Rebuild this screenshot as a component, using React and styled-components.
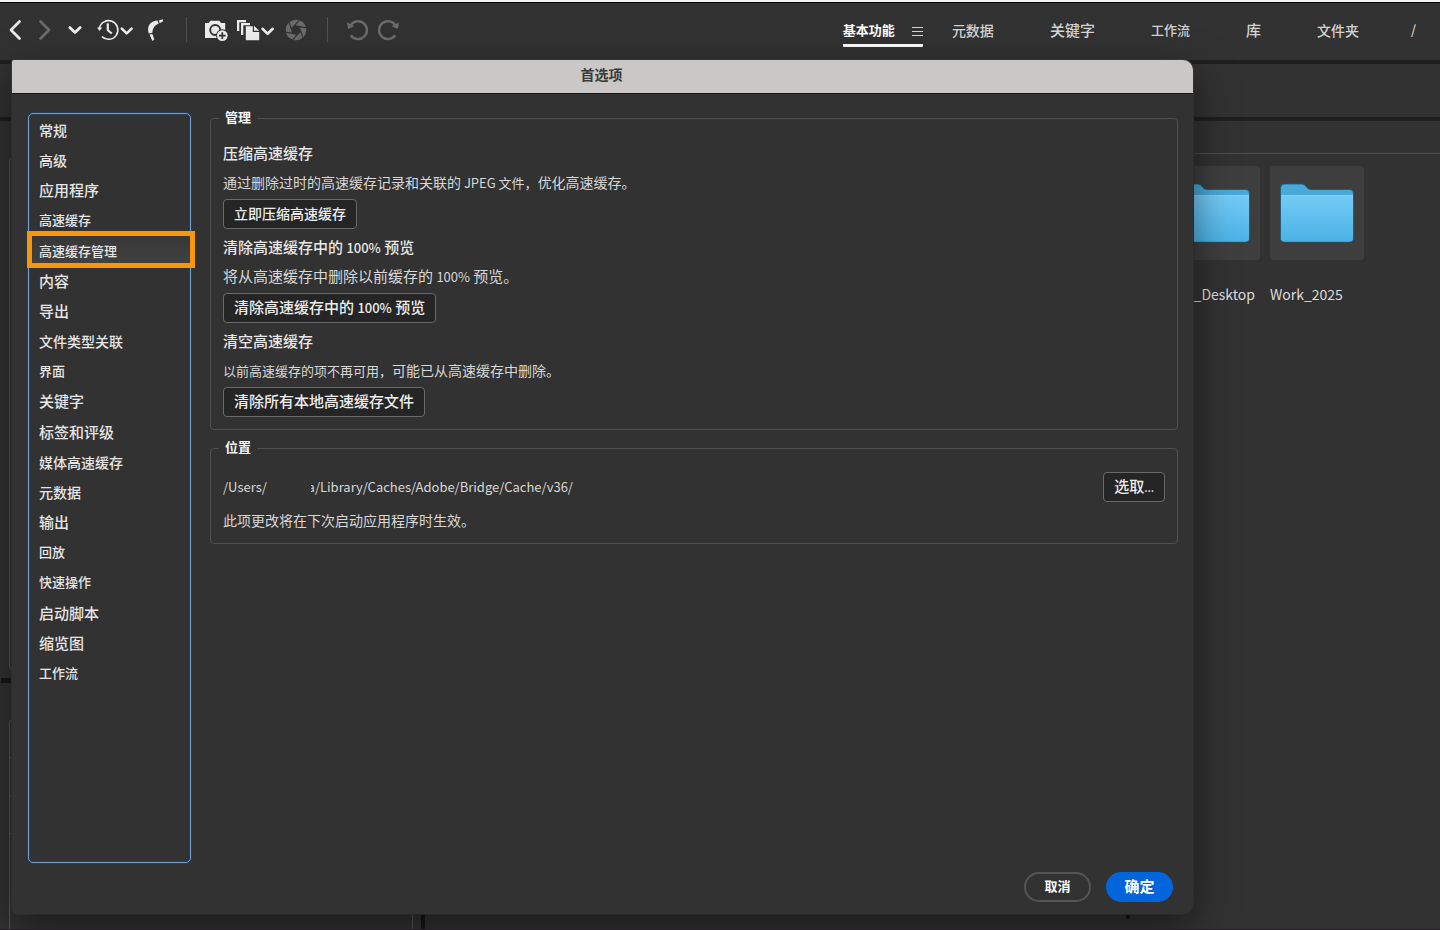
import React, { useState } from "react";
import styled, { createGlobalStyle, css } from "styled-components";

const GlobalStyle = createGlobalStyle`
  *, *::before, *::after { box-sizing: border-box; }
  body {
    margin: 0;
    background: #323232;
    color: #dedede;
    font-family: "Noto Sans CJK SC", "Noto Sans", sans-serif;
    font-size: 14px;
    line-height: 20px;
  }
  button { font-family: inherit; cursor: pointer; }
`;

/* ---------- application frame ---------- */

const Screen = styled.div`
  position: relative;
  min-height: 100vh;
  display: flex;
  flex-direction: column;
  overflow: hidden;
  border-top: 2px solid #f1f2f4;
  border-bottom: 1px solid #261f24;
`;

const Toolbar = styled.header`
  display: flex;
  align-items: center;
  justify-content: space-between;
  height: 58px;
  padding: 0 24px 0 7px;
  border-top: 1px solid #000;
`;

const Tools = styled.div`
  display: flex;
  align-items: center;
  padding-bottom: 4px;
`;

const ToolGroup = styled.div`
  display: flex;
  align-items: center;
  gap: ${(p) => p.$gap}px;
`;

const Separator = styled.span`
  width: 1px;
  height: 25px;
  margin: 0 18px 0 20px;
  background: #505050;
`;

const ToolButton = styled.button`
  display: flex;
  padding: 0;
  border: 0;
  background: none;
  color: ${(p) => (p.disabled ? "#6b6b6b" : "#ececec")};
`;

const Tabs = styled.nav`
  display: flex;
  align-items: center;
  gap: ${(p) => p.$gap}px;
`;

const Tab = styled.button`
  display: flex;
  align-items: center;
  gap: 17px;
  padding: 3px 0 4px;
  border: 0;
  border-bottom: 3px solid ${(p) => (p.$active ? "#fff" : "transparent")};
  border-radius: 1px;
  background: none;
  color: ${(p) => (p.$active ? "#fff" : "#d4d4d4")};
  font-size: ${(p) => p.$size}px;
  font-weight: ${(p) => (p.$active ? 700 : 500)};
  line-height: 20px;
  white-space: nowrap;

  svg { margin-top: 4px; }
`;

const PathBar = styled.div`
  height: 61px;
  border-top: 4px solid #1f1f1f;
  border-bottom: 4px solid #1f1f1f;
`;

const Workspace = styled.div`
  flex: 1;
  display: flex;
`;

const LeftColumn = styled.div`
  flex: 0 0 421px;
  display: flex;
  flex-direction: column;
`;

const Panel = styled.div`
  flex: 1;
  margin: 36px 8px 8px 9px;
  border: 1px solid #585858;
  border-radius: 4px;
`;

const PanelDivider = styled.div`
  height: 5px;
  margin-left: 1px;
  background: #181818;
`;

const LowerPanel = styled.div`
  flex: 0 0 210px;
  margin: 36px 8px 0 9px;
  border: 1px solid #585858;
  border-bottom: 0;
  border-radius: 4px 4px 0 0;
`;

const PanelRow = styled.div`
  height: 38px;
  border-bottom: 1px solid #585858;
`;

const ColumnDivider = styled.div`
  flex: 0 0 4px;
  background: #151515;
`;

const ContentPane = styled.main`
  flex: 1;
  display: flex;
  flex-direction: column;
  justify-content: space-between;
`;

const ContentHead = styled.div`
  height: 33px;
  border-bottom: 1px solid #4f4f4f;
`;

const Folders = styled.div`
  display: flex;
  justify-content: flex-end;
  gap: 10px;
  padding: 12px 76px 0 0;
`;

const Folder = styled.figure`
  width: 94px;
  margin: 0;
`;

const FolderTile = styled.div`
  display: grid;
  place-items: center;
  height: 94px;
  border-radius: 3px;
  background: #3e3e3e;
`;

const FolderName = styled.figcaption`
  padding-right: ${(p) => (p.$align === "right" ? 5 : 0)}px;
  margin-top: 24px;
  color: #dcdcdc;
  text-align: ${(p) => p.$align};
`;

const Grip = styled.div`
  width: 4px;
  height: 20px;
  margin: 0 0 10px calc(100% - 314px);
  background: #151515;
`;

/* ---------- preferences window ---------- */

const Dialog = styled.section`
  position: absolute;
  top: 58px;
  left: 12px;
  right: 247px;
  bottom: 15px;
  display: flex;
  flex-direction: column;
  overflow: hidden;
  border-radius: 2px 10px 12px 6px;
  background: #323232;
`;

const DialogShadow = styled(Dialog).attrs({ as: "div" })`
  overflow: visible;
  box-shadow: 0 12px 40px rgba(0, 0, 0, 0.5), 0 0 0 1px #3d3d3d;
`;

const TitleBar = styled.h1`
  flex: 0 0 34px;
  margin: 0;
  padding: 0 2px 4px 0;
  border-bottom: 1px solid #161616;
  background: #c9c8c6;
  color: #3a3a3a;
  font-size: 14px;
  font-weight: 700;
  line-height: 29px;
  text-align: center;
`;

const DialogBody = styled.div`
  flex: 1;
  display: flex;
  gap: 19px;
  padding: 15px 15px 0 16px;
`;

const Categories = styled.nav`
  flex: 0 0 163px;
  margin-top: 4px;
  border: 1px solid #6f9cc9;
  border-radius: 5px;
  box-shadow: 0 0 1px 1px #27405a, inset 0 0 1px 1px #27405a;
`;

const CategoryList = styled.ul`
  display: flex;
  flex-direction: column;
  justify-content: space-between;
  min-height: 574px;
  margin: 0;
  padding: 1px 0 0;
  list-style: none;
`;

const CategoryItem = styled.li`
  position: relative;
  height: 30px;
  background: ${(p) => (p.$selected ? "linear-gradient(#373737, #424242)" : "none")};

  ${(p) =>
    p.$selected &&
    css`
      &::after {
        content: "";
        position: absolute;
        inset: -5px -5px -2px -2px;
        border: 5px solid #f7960f;
        pointer-events: none;
      }
    `}
`;

const CategoryButton = styled.button`
  width: 100%;
  height: 100%;
  padding: 0 10px;
  border: 0;
  background: none;
  color: #e6e6e6;
  font-size: ${(p) => p.$size}px;
  font-weight: 500;
  line-height: 30px;
  text-align: left;
`;

const Settings = styled.div`
  flex: 1;
  min-width: 0;
  display: flex;
  flex-direction: column;
  gap: 9px;
`;

const Group = styled.fieldset`
  min-width: 0;
  margin: 0;
  padding: 0 8px 12px;
  border: 1px solid #505050;
  border-radius: 4px;
`;

const GroupTitle = styled.legend`
  padding: 0 6px 2px;
  color: #f4f4f4;
  font-size: 13px;
  font-weight: 700;
  line-height: 16px;
`;

const Stack = styled.div`
  display: flex;
  flex-direction: column;
  gap: 9px;
  padding: ${(p) => p.$top}px 4px 0;
`;

const Action = styled.div`
  display: flex;
  flex-direction: column;
  align-items: flex-start;
`;

const ActionTitle = styled.h2`
  margin: 0 0 9px;
  padding-bottom: 2px;
  color: #e8e8e8;
  font-size: 15px;
  font-weight: 500;
  line-height: 18px;
`;

const Note = styled.p`
  margin: 0 0 ${(p) => p.$after || 0}px;
  padding-bottom: 2px;
  color: #d8d8d8;
  font-size: ${(p) => p.$size || 14}px;
  line-height: 18px;
`;

const Path = styled.output`
  color: #d8d8d8;
  font-size: 13px;
  line-height: 20px;
`;

const Run = styled.span`
  font-size: ${(p) => p.$size}px;
  line-height: 0;
`;

const PushButton = styled.button`
  flex: none;
  height: 30px;
  padding: 0 10px 2px;
  border: 1px solid #6a6a6a;
  border-radius: 4px;
  background: #252525;
  color: #ededed;
  font-size: ${(p) => p.$size}px;
  font-weight: 500;
  line-height: 26px;
`;

const PathRow = styled.div`
  display: flex;
  align-items: center;
  justify-content: space-between;
`;

const HiddenName = styled.span`
  display: inline-block;
  width: 48px;
  height: 20px;
  overflow: hidden;
  vertical-align: top;
  white-space: nowrap;
  direction: rtl;
  clip-path: inset(0 0 0 44px);
`;

const DialogFooter = styled.footer`
  display: flex;
  justify-content: flex-end;
  gap: 15px;
  padding: 9px 20px 12px;
`;

const PillButton = styled.button`
  width: 67px;
  height: 30px;
  padding: 0 0 2px;
  border: 2px solid ${(p) => (p.$primary ? "#0265dc" : "#555")};
  border-radius: 15px;
  background: ${(p) => (p.$primary ? "#0265dc" : "transparent")};
  color: #fff;
  font-size: ${(p) => p.$size}px;
  font-weight: 700;
  line-height: 24px;
`;

/* ---------- icons ---------- */

const Chevron = ({ d }) => (
  <svg width="16" height="24" viewBox="0 0 16 24" fill="none" stroke="currentColor" strokeWidth="2.8" strokeLinecap="round" strokeLinejoin="round">
    <path d={d} />
  </svg>
);

const HistoryIcon = () => (
  <svg width="36" height="24" viewBox="0 0 36 24" fill="none" stroke="currentColor">
    <path d="M2.4 10.4A9.3 9.3 0 1 1 5 18.6" strokeWidth="1.6" />
    <path d="M0 9.5h5.2L2.6 13z" fill="currentColor" stroke="none" />
    <path d="M10.8 5.3v7l4 3.2" strokeWidth="2.2" />
    <path d="M24.8 10.6l4.9 4.8 4.9-4.8" strokeWidth="2.6" strokeLinecap="round" strokeLinejoin="round" />
  </svg>
);

const BoomerangIcon = () => (
  <svg width="19" height="24" viewBox="0 0 19 24" fill="currentColor">
    <path d="M10.600 2.600 11.600 5.800C8 7 6 9.600 5.300 14.800L1.800 15.600C-.6 8.600 3.200 3 10.600 2.600z" />
    <path d="M11.800 2.400 15.800 1.200 16 3.200 12.700 5.300z" />
    <path d="M2.500 16.600 5.400 16 7.300 21.600 5.400 22.900z" />
  </svg>
);

const CameraIcon = () => (
  <svg width="24" height="24" viewBox="0 0 24 24">
    <path fill="currentColor" d="M0 5h3.800l1.600-2.200h9L16 5h4.200v15H0z" />
    <circle cx="10.200" cy="12" r="5" fill="none" stroke="#323232" strokeWidth="1.900" />
    <circle cx="17.300" cy="17.600" r="6.300" fill="#323232" />
    <circle cx="17.300" cy="17.600" r="5.400" fill="currentColor" />
    <path d="M17.300 14.300v6.600M14 17.600h6.600" stroke="#323232" strokeWidth="1.700" />
  </svg>
);

const PagesIcon = () => (
  <svg width="38" height="24" viewBox="0 0 38 24" fill="currentColor">
    <path d="M0 2h9v2.200H2.300V13H0z" />
    <path d="M4 5h9v2.200H6.300V17H4z" />
    <path d="M8.800 8.200h7V14h6.400v8.200H8.800z" />
    <path d="M17 7.800l5.200 4.900H17z" />
    <path d="M25.500 10.800l5.100 5 5.100-5" fill="none" stroke="currentColor" strokeWidth="2.600" strokeLinecap="round" strokeLinejoin="round" />
  </svg>
);

const ApertureIcon = () => (
  <svg width="24" height="24" viewBox="0 0 24 24" fill="currentColor">
    {[0, 60, 120, 180, 240, 300].map((a) => (
      <path key={a} transform={`rotate(${a} 13 12)`} d="M6.400 4.200A10.300 10.300 0 0 1 15.600 2L8.800 9.800z" />
    ))}
  </svg>
);

const TurnIcon = ({ flip }) => (
  <svg width="23" height="24" viewBox="0 0 23 24">
    <g transform={flip ? "translate(23 0) scale(-1 1)" : undefined}>
      <path d="M4.400 7.600A8.900 8.900 0 1 1 4.800 17.300" fill="none" stroke="currentColor" strokeWidth="2.400" />
      <path d="M.8 4.300 8.400 8.200 2.200 11z" fill="currentColor" />
    </g>
  </svg>
);

const MenuIcon = () => (
  <svg width="11" height="11" viewBox="0 0 11 11" stroke="#d6d6d6" strokeWidth="1">
    <path d="M0 1.500h11M0 5.500h11M0 9.500h11" />
  </svg>
);

const FolderIcon = ({ id }) => (
  <svg width="76" height="62" viewBox="0 0 76 62">
    <defs>
      <linearGradient id={id} x1="0" y1="0" x2="0" y2="1">
        <stop offset="0" stopColor="#74cbf6" />
        <stop offset="1" stopColor="#4bb2e6" />
      </linearGradient>
    </defs>
    <path fill="#48a8d8" stroke="#1d5876" strokeWidth="0.800" d="M1.500 6a4 4 0 0 1 4-4h17c5 0 4.500 5.500 9.500 5.500h38.500a4 4 0 0 1 4 4V56a4 4 0 0 1-4 4h-65a4 4 0 0 1-4-4z" />
    <path fill={`url(#${id})`} d="M2 13.500h72V56a3.500 3.500 0 0 1-3.500 3.500h-65A3.500 3.500 0 0 1 2 56z" />
    <path d="M2 13.500h72" stroke="#8ed6f8" strokeWidth="0.800" />
  </svg>
);

/* ---------- data ---------- */

const categories = [
  ["常规", 14],
  ["高级", 14],
  ["应用程序", 15],
  ["高速缓存", 13],
  ["高速缓存管理", 13],
  ["内容", 15],
  ["导出", 15],
  ["文件类型关联", 14],
  ["界面", 13],
  ["关键字", 15],
  ["标签和评级", 15],
  ["媒体高速缓存", 14],
  ["元数据", 14],
  ["输出", 15],
  ["回放", 13],
  ["快速操作", 13],
  ["启动脚本", 15],
  ["缩览图", 15],
  ["工作流", 13],
];

export default function App() {
  const [selected, setSelected] = useState("高速缓存管理");

  return (
    <Screen>
      <GlobalStyle />
      <Toolbar>
        <Tools>
          <ToolGroup $gap={14}>
            <ToolButton aria-label="后退"><Chevron d="M12.500 3.500 4 12l8.500 8.500" /></ToolButton>
            <ToolButton aria-label="前进" disabled><Chevron d="M3.500 3.500 12 12l-8.500 8.500" /></ToolButton>
            <ToolButton aria-label="上级文件夹"><Chevron d="M2.800 9.600 8 14.600l5.200-5" /></ToolButton>
            <ToolButton aria-label="最近使用"><HistoryIcon /></ToolButton>
            <ToolButton aria-label="返回"><BoomerangIcon /></ToolButton>
          </ToolGroup>
          <Separator />
          <ToolGroup $gap={8}>
            <ToolButton aria-label="从相机获取照片"><CameraIcon /></ToolButton>
            <ToolButton aria-label="优化"><PagesIcon /></ToolButton>
            <ToolButton aria-label="在 Camera Raw 中打开" disabled><ApertureIcon /></ToolButton>
          </ToolGroup>
          <Separator />
          <ToolGroup $gap={8}>
            <ToolButton aria-label="逆时针旋转" disabled><TurnIcon /></ToolButton>
            <ToolButton aria-label="顺时针旋转" disabled><TurnIcon flip /></ToolButton>
          </ToolGroup>
        </Tools>
        <Tabs $gap={56} aria-label="工作区">
          <Tabs as="div" $gap={29}>
            <Tab $active $size={13}>基本功能<MenuIcon /></Tab>
            <Tab $size={14}>元数据</Tab>
          </Tabs>
          <Tab $size={15}>关键字</Tab>
          <Tab $size={13}>工作流</Tab>
          <Tab $size={15}>库</Tab>
          <Tabs as="div" $gap={52}>
            <Tab $size={14}>文件夹</Tab>
            <Tab $size={13}>/</Tab>
          </Tabs>
        </Tabs>
      </Toolbar>
      <PathBar />
      <Workspace>
        <LeftColumn>
          <Panel />
          <PanelDivider />
          <LowerPanel>
            <PanelRow />
            <PanelRow />
            <PanelRow />
          </LowerPanel>
        </LeftColumn>
        <ColumnDivider />
        <ContentPane>
          <div>
            <ContentHead />
            <Folders>
              <Folder>
                <FolderTile><FolderIcon id="folder-desktop" /></FolderTile>
                <FolderName $align="right">n_Desktop</FolderName>
              </Folder>
              <Folder>
                <FolderTile><FolderIcon id="folder-work" /></FolderTile>
                <FolderName $align="left">Work_2025</FolderName>
              </Folder>
            </Folders>
          </div>
          <Grip />
        </ContentPane>
      </Workspace>

      <DialogShadow />
      <Dialog role="dialog" aria-labelledby="dialog-title">
        <TitleBar id="dialog-title">首选项</TitleBar>
        <DialogBody>
          <Categories aria-label="首选项类别">
            <CategoryList>
              {categories.map(([name, size]) => (
                <CategoryItem key={name} $selected={name === selected}>
                  <CategoryButton $size={size} onClick={() => setSelected(name)}>{name}</CategoryButton>
                </CategoryItem>
              ))}
            </CategoryList>
          </Categories>
          <Settings>
            <Group>
              <GroupTitle>管理</GroupTitle>
              <Stack $top={17}>
                <Action>
                  <ActionTitle>压缩高速缓存</ActionTitle>
                  <Note $after={6}>通过删除过时的高速缓存记录和关联的<Run $size={13}> JPEG 文件，</Run>优化高速缓存。</Note>
                  <PushButton $size={14}>立即压缩高速缓存</PushButton>
                </Action>
                <Action>
                  <ActionTitle>清除高速缓存中的 <Run $size={13}>100%</Run> 预览</ActionTitle>
                  <Note $after={6} $size={15}>将从高速缓存中删除以前缓存的 <Run $size={13}>100%</Run> 预览。</Note>
                  <PushButton $size={15}>清除高速缓存中的 <Run $size={13}>100%</Run> 预览</PushButton>
                </Action>
                <Action>
                  <ActionTitle>清空高速缓存</ActionTitle>
                  <Note $after={6}><Run $size={13}>以前高速缓存的项不再可用，</Run>可能已从高速缓存中删除。</Note>
                  <PushButton $size={15}>清除所有本地高速缓存文件</PushButton>
                </Action>
              </Stack>
            </Group>
            <Group>
              <GroupTitle>位置</GroupTitle>
              <Stack $top={15}>
                <PathRow>
                  <Path>/Users/<HiddenName>a</HiddenName>/Library/Caches/Adobe/Bridge/Cache/v36/</Path>
                  <PushButton $size={15}>选取<Run $size={11}>...</Run></PushButton>
                </PathRow>
                <Note>此项更改将在下次启动应用程序时生效。</Note>
              </Stack>
            </Group>
          </Settings>
        </DialogBody>
        <DialogFooter>
          <PillButton $size={13}>取消</PillButton>
          <PillButton $primary $size={15}>确定</PillButton>
        </DialogFooter>
      </Dialog>
    </Screen>
  );
}
